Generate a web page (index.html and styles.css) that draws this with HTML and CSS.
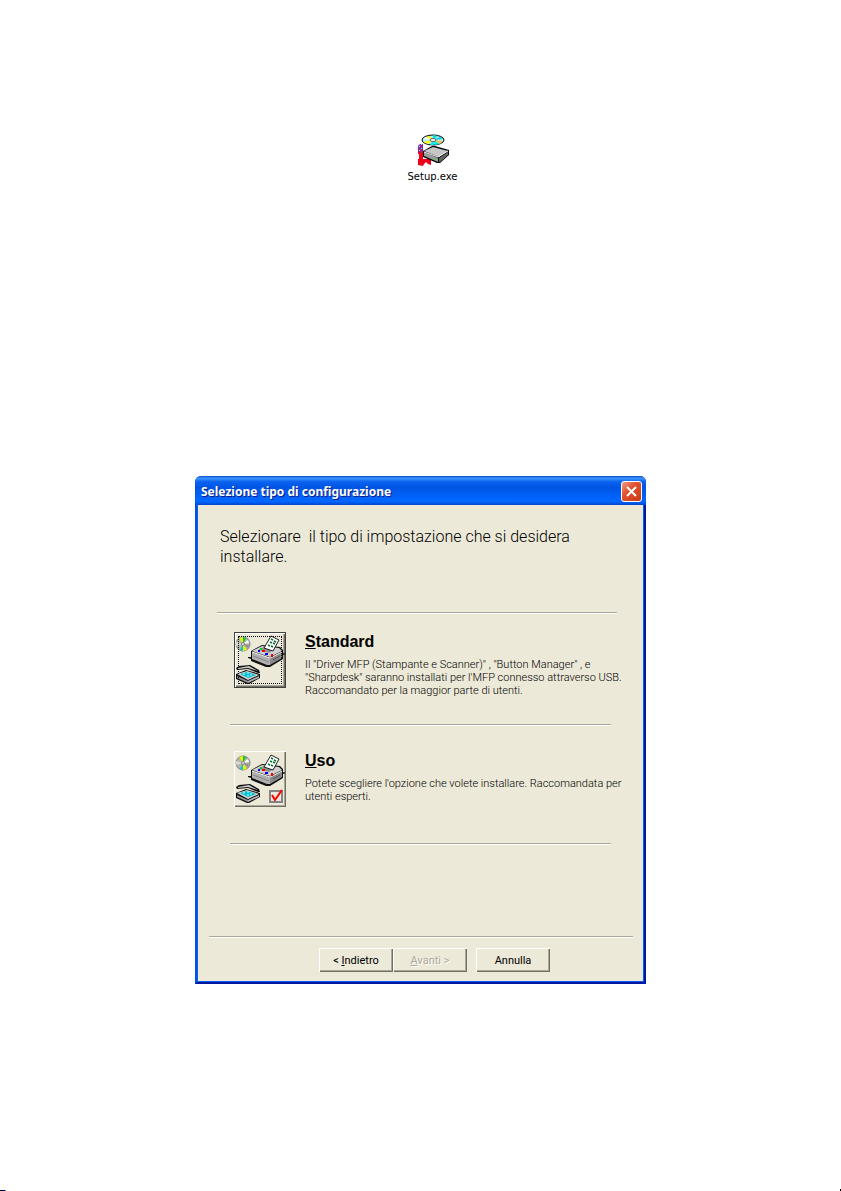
FILE: index.html
```html
<!DOCTYPE html>
<html lang="it">
<head>
<meta charset="utf-8">
<title>Selezione tipo di configurazione</title>
<meta name="viewport" content="width=device-width, initial-scale=1">
<link rel="stylesheet" href="styles.css">
</head>
<body>
<svg class="defs" width="0" height="0" aria-hidden="true">
  <defs>
    <g id="disc">
      <circle cx="9" cy="12" r="7" fill="#b5b5a8" stroke="#848484"/>
      <path d="M9 12 5 6l4-1z" fill="#f0f000"/>
      <path d="M9 12V5l3 1z" fill="#00c840"/>
      <path d="M9 12 2 10v4z" fill="#d8d8d8"/>
      <path d="M9 12l5-4 1 3z" fill="#fff"/>
      <path d="M9 12l4 6-4 1z" fill="#f0f000"/>
      <path d="M9 12v7l-3-1z" fill="#00c8d8"/>
      <path d="M9 12l6 1-1 3z" fill="#909090"/>
      <circle cx="9" cy="12" r="1.500" fill="#ece9d8" stroke="#848484"/>
    </g>
    <g id="printer">
      <path d="M14 25h3v-6l11-6 18 2 3 3v3l3 1-3 1v4l-13 8h-4L17 29v-2l-3-1z" fill="#101010"/>
      <path d="M18 19 28 14l17 2 3 3-12 6z" fill="#d0d0d0"/>
      <path d="M18 20l18 6v7h-3l-15-6z" fill="#b0b0b0"/>
      <path d="M36 26l12-6v6l-12 7z" fill="#8a8a8a"/>
      <path d="M24 18l6-3 11 2-6 4z" fill="#909090"/>
      <path d="M18 20l18 6 12-6" fill="none" stroke="#f4f4f4"/>
      <path d="M19 24l16 6" stroke="#848484"/>
      <path d="M39 28l7-4" stroke="#505050"/>
      <path d="M30 16 37 4l8 4-6 11z" fill="#fff" stroke="#202020"/>
      <path d="M37 7l2 1m1 1 2 1m-6 0 2 1m1 0 2 1m-7 1 2 1m1 0 2 1" fill="none" stroke="#007028" stroke-width="1.500"/>
      <path d="M26 16h2v2h-2z" fill="#00d820"/>
      <path d="M28 18h3v2h-3z" fill="#f00"/>
      <path d="M24 18h2v2h-2zM31 21h3v2h-3z" fill="#00f"/>
      <path d="M37 22h2v3h-2z" fill="#f00"/>
    </g>
    <g id="scanner">
      <path d="M2 42l10-4 14 4v4l-11 6h-2L2 47z" fill="#101010"/>
      <path d="M3 42l10-3 12 4-11 5z" fill="#d0d0d0"/>
      <path d="M6 42l7-2 9 3-8 3z" fill="#00c0d0"/>
      <path d="M9 42h2m2-1h2m1 2h2m-5 1h2" stroke="#c8ffff"/>
      <path d="M3 44l11 5v2L3 46z" fill="#909090"/>
      <path d="M14 49l11-5v2l-11 5z" fill="#b0b0b0"/>
      <path d="M2 36l3-2 11-1 9 5 1 3h-2l-10-4-11 1z" fill="#101010"/>
      <path d="M4 36l11-2 9 5-10-3-10 1z" fill="#c8c8c8"/>
    </g>
  </defs>
</svg>

<main class="page">
  <figure class="file">
    <svg class="file-icon" viewBox="0 0 34 33" aria-hidden="true">
      <path d="M2 12l2-2h3v15h6l2 1v5l-3-1-2-2-2 2-1 2-5-1v-6h1v-5H2z" fill="#f00018"/>
      <path d="M4 10h1v1H4zm2 0h1v1H6zM3 11h1v1H3zm2 0h1v1H5zM2 12h1v1H2zm2 0h1v1H4zm2 0h1v1H6zM3 13h1v1H3zm2 0h1v1H5zM2 14h1v1H2zm2 0h1v1H4zm2 0h1v1H6zM3 15h1v1H3zm2 0h1v1H5zM4 16h1v1H4zm2 0h1v1H6zM3 17h1v1H3zm2 0h1v1H5zM4 18h1v1H4z" fill="#3050ff"/>
      <path d="M5 10h1v1H5zM3 12h1v1H3zm2 2h1v1H5zM3 16h1v1H3z" fill="#c0c8ff"/>
      <ellipse cx="17" cy="6" rx="11" ry="5" fill="#b8f0f0" stroke="#000"/>
      <path d="M17 6 7 5l3-2z" fill="#fff"/>
      <path d="M17 6 10 3l4-1z" fill="#ff0"/>
      <path d="M17 6V1l5 1z" fill="#00e8e8"/>
      <path d="M17 6l7-3 3 2z" fill="#00c8e8"/>
      <path d="M17 6 7 8l5 2z" fill="#ff0"/>
      <path d="M17 6l-3 5h4z" fill="#00e8e8"/>
      <path d="M17 6l7 4-5 1z" fill="#00e8e8"/>
      <path d="M17 6l10 1-3 3z" fill="#e8c060"/>
      <ellipse cx="17" cy="6" rx="3" ry="1.500" fill="#fff" stroke="#606060"/>
      <path d="M7 17l9-5h3l14 4v5l-9 8h-3L7 23z" fill="#000"/>
      <path d="M8 17l9-4 15 4-9 6z" fill="#c6c6c6"/>
      <path d="M8 18l14 6v4L8 22z" fill="#9a9a9a"/>
      <path d="M23 24l9-6v3l-8 7h-1z" fill="#636363"/>
      <path d="M8 18l14 5 10-6" fill="none" stroke="#eee"/>
      <path d="M19 25h2v1h-2z" fill="#0f0"/>
    </svg>
    <figcaption>Setup.exe</figcaption>
  </figure>

  <section class="dialog" role="dialog" aria-labelledby="dialog-title">
    <header class="titlebar">
      <h1 class="title" id="dialog-title">Selezione tipo di configurazione</h1>
      <button class="close" type="button" aria-label="Chiudi">
        <svg class="close-icon" viewBox="0 0 13 13" aria-hidden="true"><path d="M2 2l9 9M11 2l-9 9" stroke="#fff" stroke-width="2"/></svg>
      </button>
    </header>

    <div class="content">
      <p class="intro">Selezionare&nbsp; il tipo di impostazione che si desidera<br>installare.</p>
      <hr class="rule rule-wide">

      <div class="option">
        <button class="option-button focused" type="button" aria-labelledby="standard">
          <svg class="option-icon" viewBox="0 0 52 56" aria-hidden="true">
            <use href="#disc"/><use href="#printer"/><use href="#scanner"/>
          </svg>
        </button>
        <div class="option-text">
          <h2 class="option-title" id="standard"><u>S</u>tandard</h2>
          <p class="description">Il "Driver MFP (Stampante e Scanner)" , "Button Manager" , e<br>"Sharpdesk" saranno installati per l'MFP connesso attraverso USB.<br>Raccomandato per la maggior parte di utenti.</p>
        </div>
      </div>
      <hr class="rule">

      <div class="option">
        <button class="option-button" type="button" aria-labelledby="custom">
          <svg class="option-icon" viewBox="0 0 52 56" aria-hidden="true">
            <use href="#disc"/><use href="#printer"/><use href="#scanner"/>
            <path d="M36 40h12v11H36z" fill="#ece9d8" stroke="#848484" stroke-width="2"/>
            <path d="M38 44l3 5 7-10" fill="none" stroke="#f00" stroke-width="2"/>
          </svg>
        </button>
        <div class="option-text">
          <h2 class="option-title" id="custom"><u>U</u>so</h2>
          <p class="description">Potete scegliere l'opzione che volete installare. Raccomandata per<br>utenti esperti.</p>
        </div>
      </div>
      <hr class="rule">
    </div>

    <footer class="actions">
      <button class="action" type="button">&lt; <u>I</u>ndietro</button>
      <button class="action" type="button" disabled><u>A</u>vanti &gt;</button>
      <button class="action cancel" type="button">Annulla</button>
    </footer>
  </section>
  <div class="page-end"><span class="mark"></span><span class="dot"></span></div>
</main>
</body>
</html>
```
FILE: styles.css
```css
* { box-sizing: border-box; }

body {
  margin: 0;
  background: #fff;
  color: #000;
  font: 11px/13px Roboto, "Liberation Sans", Arial, sans-serif;
}

h1, h2, p, figure { margin: 0; }

.defs { position: absolute; }

.page {
  display: flex;
  flex-direction: column;
  align-items: center;
  min-height: 100vh;
  padding-top: 134px;
}

.file {
  display: flex;
  flex-direction: column;
  align-items: center;
  gap: 3px;
  padding-left: 24px;
  margin-bottom: 292px;
  font: 10px/14px "DejaVu Sans", Tahoma, sans-serif;
}

.file-icon { width: 34px; height: 33px; }

.dialog {
  display: flex;
  flex-direction: column;
  width: 100%;
  max-width: 451px;
  min-height: 508px;
  border: solid #0054e3;
  border-width: 0 2px 2px;
  border-right-color: #0018a0;
  border-bottom-color: #0018a0;
  border-radius: 6px 6px 0 0;
  background: #ece9d8;
  box-shadow: inset 1px -1px #0a5cf0, inset -1px 0 #0a5cf0;
}

.titlebar {
  display: flex;
  align-items: center;
  justify-content: space-between;
  height: 29px;
  margin: 0 -2px;
  padding: 2px 4px 0 6px;
  border-radius: 6px 6px 0 0;
  background: linear-gradient(#0a4fd0 0, #3c94ff 8%, #0a62f0 20%, #0054e3 40%, #0062fa 70%, #0068ff 88%, #0044cc 100%);
}

.title {
  color: #fff;
  font: bold 12px/16px "Noto Sans", "Trebuchet MS", sans-serif;
  text-shadow: 1px 1px #0a1883;
}

.close {
  display: grid;
  place-items: center;
  width: 21px;
  height: 21px;
  padding: 0;
  border: 1px solid #fff;
  border-radius: 3px;
  background: linear-gradient(135deg, #f0a088, #e25030 40%, #c83c14);
}

.close-icon { width: 13px; height: 13px; }

.content { padding: 22px 27px 0 20px; }

.intro {
  min-height: 85px;
  padding-left: 3px;
  font-size: 16px;
  font-weight: 300;
  line-height: 20px;
}

.rule {
  height: 2px;
  margin: 0 6px 0 13px;
  border: solid;
  border-width: 1px 0;
  border-color: #aca899 #fff #fff;
}

.rule-wide { margin: 0; }

.option {
  display: flex;
  gap: 19px;
  min-height: 117px;
  margin-left: 17px;
  padding-top: 25px;
}

.rule-wide + .option {
  min-height: 110px;
  padding-top: 18px;
}

.option-button {
  flex: none;
  width: 52px;
  height: 56px;
  padding: 0;
  border: 0;
  outline-offset: -5px;
  background: #ece9d8;
  box-shadow: inset 1px 1px #fff, inset -1px -1px #716f64, inset -2px -2px #aca899;
}

.focused {
  outline: 1px dotted #000;
  box-shadow: inset 0 0 0 1px #404040, inset 2px 2px #fff, inset -2px -2px #716f64, inset -3px -3px #aca899;
}

.option-icon { display: block; width: 52px; height: 56px; }

.option-title {
  margin-bottom: 6px;
  font: bold 16px/20px "Liberation Sans", Arial, sans-serif;
}

.description {
  font-weight: 300;
  white-space: nowrap;
}

.actions {
  display: flex;
  justify-content: center;
  margin: auto 11px 10px 12px;
  padding: 11px 0 0 27px;
  border-top: 1px solid #aca899;
  box-shadow: inset 0 1px #fff;
}

.action {
  width: 74px;
  height: 24px;
  padding: 0;
  border: 0;
  background: #ece9d8;
  color: #000;
  font: inherit;
  box-shadow: inset 1px 1px #fff, inset -1px -1px #716f64, inset -2px -2px #aca899;
}

.action:disabled { color: #aca899; text-shadow: 1px 1px #fff; }

.cancel { margin-left: 9px; }

.page-end {
  display: flex;
  justify-content: space-between;
  align-items: flex-end;
  width: 100%;
  margin-top: auto;
}

.mark {
  width: 6px;
  height: 1px;
  background: linear-gradient(90deg, #000 40%, #00f 60%, #000 80%, #8ff);
}

.dot { width: 1px; height: 2px; background: #000; }
```
